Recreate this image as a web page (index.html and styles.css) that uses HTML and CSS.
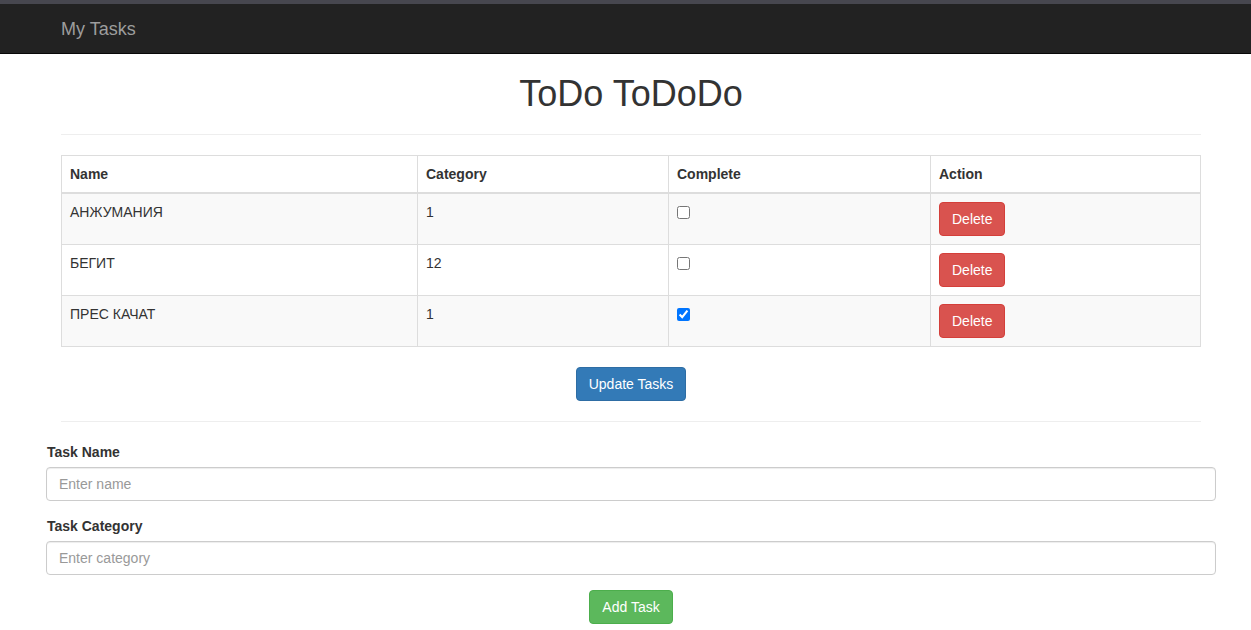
FILE: index.html
```html
<!DOCTYPE html>
<html lang="en">
<head>
<meta charset="utf-8">
<title>My Tasks</title>
<link rel="stylesheet" href="styles.css">
</head>
<body>
<div class="topstrip"></div>
<nav class="navbar">
  <div class="page">
    <a class="brand" href="#">My Tasks</a>
  </div>
</nav>
<div class="page">
  <div class="main">
    <h1 class="title">ToDo ToDoDo</h1>
    <hr class="rule">
    <table class="tasks">
      <thead>
        <tr>
          <th class="col-name">Name</th>
          <th class="col-cat">Category</th>
          <th class="col-done">Complete</th>
          <th class="col-act">Action</th>
        </tr>
      </thead>
      <tbody>
        <tr>
          <td>АНЖУМАНИЯ</td>
          <td>1</td>
          <td><input type="checkbox" class="check"></td>
          <td><button class="btn btn-danger">Delete</button></td>
        </tr>
        <tr>
          <td>БЕГИТ</td>
          <td>12</td>
          <td><input type="checkbox" class="check"></td>
          <td><button class="btn btn-danger">Delete</button></td>
        </tr>
        <tr>
          <td>ПРЕС КАЧАТ</td>
          <td>1</td>
          <td><input type="checkbox" class="check" checked></td>
          <td><button class="btn btn-danger">Delete</button></td>
        </tr>
      </tbody>
    </table>
    <div class="center">
      <button class="btn btn-primary">Update Tasks</button>
    </div>
    <hr class="rule">
  </div>
  <form class="task-form">
    <div class="form-group">
      <label class="label" for="name">Task Name</label>
      <input class="form-control" id="name" type="text" placeholder="Enter name">
    </div>
    <div class="form-group">
      <label class="label" for="cat">Task Category</label>
      <input class="form-control" id="cat" type="text" placeholder="Enter category">
    </div>
    <div class="center">
      <button class="btn btn-success" type="button">Add Task</button>
    </div>
  </form>
</div>
</body>
</html>
```
FILE: styles.css
```css
* { box-sizing: border-box; }
html, body { margin: 0; padding: 0; }
body {
  font-family: "Liberation Sans", Arial, Helvetica, sans-serif;
  font-size: 14px;
  line-height: 1.42857143;
  color: #333;
  background: #fff;
}
.topstrip { height: 4px; background: #47474f; }
.navbar {
  height: 50px;
  background: #222;
  border-bottom: 1px solid #080808;
}
.page { width: 1170px; margin-left: 46px; }
.brand {
  display: inline-block;
  padding: 15px;
  font-size: 18px;
  line-height: 20px;
  color: #9d9d9d;
  text-decoration: none;
}
.main { padding: 0 15px; }
.title {
  margin: 20px 0 10px;
  font-size: 36px;
  font-weight: 500;
  line-height: 1.1;
  text-align: center;
  color: #333;
}
.rule {
  margin: 20px 0;
  border: 0;
  border-top: 1px solid #eee;
  height: 0;
}
.tasks {
  width: 100%;
  border-collapse: collapse;
  border-spacing: 0;
  border: 1px solid #ddd;
  margin-bottom: 20px;
  table-layout: fixed;
}
.tasks th, .tasks td {
  padding: 8px;
  border: 1px solid #ddd;
  text-align: left;
  vertical-align: top;
  line-height: 1.42857143;
}
.tasks th { border-bottom: 2px solid #ddd; font-weight: bold; vertical-align: bottom; }
.tasks tbody tr:nth-child(odd) { background: #f9f9f9; }
.col-name { width: 356px; }
.col-cat { width: 251px; }
.col-done { width: 262px; }
.col-act { width: 270px; }
.check { margin: 4px 0 0; width: 13px; height: 13px; }
.btn {
  display: inline-block;
  padding: 6px 12px;
  font-family: inherit;
  font-size: 14px;
  line-height: 1.42857143;
  border: 1px solid transparent;
  border-radius: 4px;
  color: #fff;
  cursor: pointer;
  vertical-align: middle;
}
.btn-danger { background: #d9534f; border-color: #d43f3a; }
.btn-primary { background: #337ab7; border-color: #2e6da4; }
.btn-success { background: #5cb85c; border-color: #4cae4c; }
.center { text-align: center; }
.center .btn { vertical-align: top; }
.form-group { margin-bottom: 15px; }
.label {
  display: inline-block;
  max-width: 100%;
  margin-bottom: 5px;
  padding-left: 1px;
  font-weight: bold;
}
.form-control {
  display: block;
  width: 100%;
  height: 34px;
  padding: 6px 12px;
  font-family: inherit;
  font-size: 14px;
  line-height: 1.42857143;
  color: #555;
  background: #fff;
  border: 1px solid #ccc;
  border-radius: 4px;
  box-shadow: inset 0 1px 1px rgba(0,0,0,.075);
}
.form-control::placeholder { color: #999; }
```
